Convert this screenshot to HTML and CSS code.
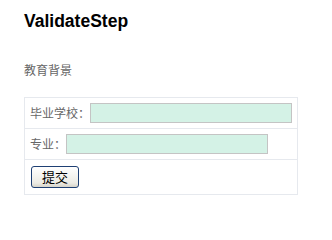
FILE: index.html
```html
<!DOCTYPE html>
<html lang="zh">
<head>
<meta charset="utf-8">
<title>ValidateStep</title>
<link rel="stylesheet" href="styles.css">
</head>
<body>
<h1 class="title">ValidateStep</h1>
<p class="section">教育背景</p>
<form class="form">
  <div class="row">
    <label class="label" for="school">毕业学校：</label><input class="field" id="school" type="text">
  </div>
  <div class="row">
    <label class="label" for="major">专业：</label><input class="field" id="major" type="text">
  </div>
  <div class="row row-last">
    <button class="btn" type="button">提交</button>
  </div>
</form>
</body>
</html>
```

FILE: styles.css
```css
html, body {
  margin: 0;
  padding: 0;
  background: #ffffff;
}
body {
  padding-left: 24px;
  font-family: "Liberation Sans", Arial, "Noto Sans CJK SC", sans-serif;
}
.title {
  margin: 11px 0 0 0;
  font-size: 17.5px;
  line-height: 20px;
  font-weight: bold;
  color: #000;
}
.section {
  margin: 31px 0 0 0;
  font-size: 12px;
  line-height: 16px;
  color: #666;
  font-family: "Noto Sans CJK SC", sans-serif;
}
.form {
  margin-top: 19px;
  width: 272px;
  border: 1px solid #e6e9ee;
}
.row {
  display: flex;
  align-items: center;
  height: 30px;
  padding-left: 5px;
  border-bottom: 1px solid #e6e9ee;
}
.row-last {
  height: 34px;
  border-bottom: none;
}
.label {
  font-family: "Noto Sans CJK SC", sans-serif;
  font-size: 12px;
  color: #666;
  line-height: 16px;
}
.field {
  box-sizing: border-box;
  width: 202px;
  height: 20px;
  margin: 0;
  padding: 0;
  border: 1px solid #c4c4c4;
  background: #d4f2e6;
}
.btn {
  box-sizing: border-box;
  width: 48px;
  height: 22px;
  margin: 0 0 0 1px;
  padding: 0;
  border: 1px solid #1e3f73;
  border-radius: 3px;
  background: linear-gradient(#ffffff, #ecebe4 80%, #d6d3c8);
  font-family: "Noto Sans CJK SC", sans-serif;
  font-size: 13px;
  color: #000;
  line-height: 18px;
}
```
